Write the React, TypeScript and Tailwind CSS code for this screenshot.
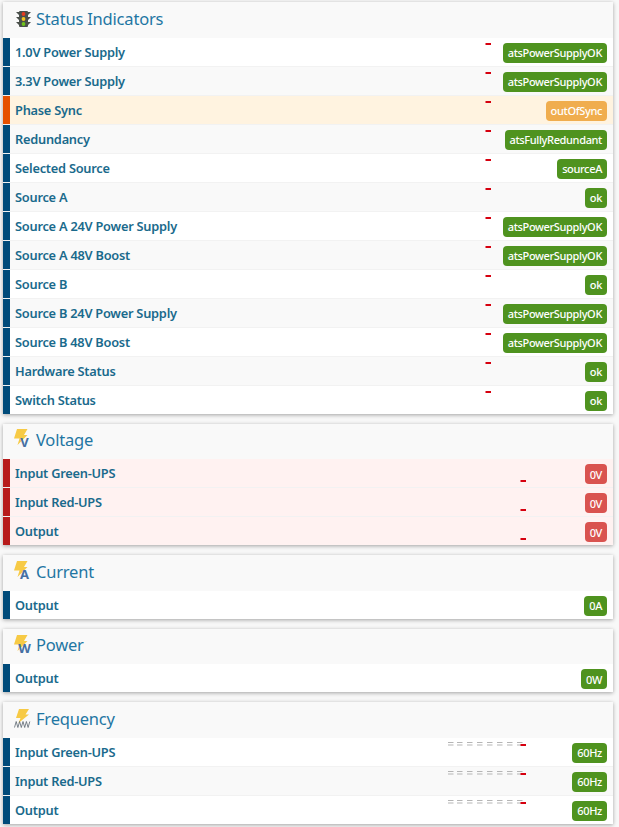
import React from 'react';

type Tone = 'ok' | 'warn' | 'bad';

type Row = { label: string; value: string; tone?: Tone };

const statusRows: Row[] = [
  { label: '1.0V Power Supply', value: 'atsPowerSupplyOK' },
  { label: '3.3V Power Supply', value: 'atsPowerSupplyOK' },
  { label: 'Phase Sync', value: 'outOfSync', tone: 'warn' },
  { label: 'Redundancy', value: 'atsFullyRedundant' },
  { label: 'Selected Source', value: 'sourceA' },
  { label: 'Source A', value: 'ok' },
  { label: 'Source A 24V Power Supply', value: 'atsPowerSupplyOK' },
  { label: 'Source A 48V Boost', value: 'atsPowerSupplyOK' },
  { label: 'Source B', value: 'ok' },
  { label: 'Source B 24V Power Supply', value: 'atsPowerSupplyOK' },
  { label: 'Source B 48V Boost', value: 'atsPowerSupplyOK' },
  { label: 'Hardware Status', value: 'ok' },
  { label: 'Switch Status', value: 'ok' },
];

const voltageRows: Row[] = [
  { label: 'Input Green-UPS', value: '0V', tone: 'bad' },
  { label: 'Input Red-UPS', value: '0V', tone: 'bad' },
  { label: 'Output', value: '0V', tone: 'bad' },
];

const frequencyRows: Row[] = [
  { label: 'Input Green-UPS', value: '60Hz' },
  { label: 'Input Red-UPS', value: '60Hz' },
  { label: 'Output', value: '60Hz' },
];

function TrafficLight() {
  return (
    <svg width="15" height="16" viewBox="0 0 15 16" className="shrink-0">
      <path d="M0 1h3v3zM15 1h-3v3zM0 6h3v3zM15 6h-3v3zM0 11h3v3zM15 11h-3v3z" fill="#4a4f4a" />
      <rect x="3" y="0" width="9" height="16" rx="1" fill="#4b514c" />
      <circle cx="7.5" cy="3" r="1.9" fill="#e53b1f" />
      <circle cx="7.5" cy="8" r="1.9" fill="#f4c51c" />
      <circle cx="7.5" cy="13" r="1.9" fill="#6fc31c" />
    </svg>
  );
}

function BoltIcon({ letter }: { letter: string }) {
  return (
    <svg width="18" height="22" viewBox="0 0 18 22" className="shrink-0">
      <path d="M3 0h10.5L10 6h3.5L3.5 16l2-6.5H0z" fill="#f7ca45" />
      <text x="10.5" y="18" textAnchor="middle" fontSize="13" fontWeight="700" fontFamily="'Noto Sans', sans-serif" fill="#4570a3">
        {letter}
      </text>
    </svg>
  );
}

function WaveIcon() {
  return (
    <svg width="18" height="20" viewBox="0 0 18 20" className="shrink-0">
      <path d="M5 0h10l-3.5 5.5H15L4.5 14l2-5H2z" fill="#f7ca45" />
      <path d="M0.5 18.5l1.7-6 1.7 6 1.7-6 1.7 6 1.7-6 1.7 6 1.7-6 1.7 6 1.7-6" fill="none" stroke="#5c6670" strokeWidth="0.8" />
    </svg>
  );
}

const dashes = [2, 11, 21, 31, 41, 51, 61, 71];

function Spark({ className, dashed }: { className: string; dashed?: boolean }) {
  return (
    <svg width="80" height="5" viewBox="0 0 80 5" className={className}>
      {dashed &&
        dashes.map((x) => (
          <g key={x} stroke="#b5b5b5" strokeWidth="1">
            <line x1={x} y1="0.5" x2={x + 5.5} y2="0.5" />
            <line x1={x} y1="3" x2={x + 5.5} y2="3" />
          </g>
        ))}
      <rect x="74.5" y={dashed ? 2 : 1} width="5.5" height="2" fill="#d6000f" />
    </svg>
  );
}

function Badge({ value, tone }: { value: string; tone?: Tone }) {
  const color = tone === 'warn' ? 'bg-[#f0ad4e]' : tone === 'bad' ? 'bg-[#d9534f]' : 'bg-[#4f931f]';
  return (
    <span className={`${color} rounded-[4px] px-[5px] h-5 flex items-center text-[11px] font-medium tracking-[-0.35px] text-white leading-none mt-[5px]`}>
      {value}
    </span>
  );
}

function DataRow({
  row,
  index,
  sparkClass,
  valueClass,
  dashed,
}: {
  row: Row;
  index: number;
  sparkClass: string;
  valueClass: string;
  dashed?: boolean;
}) {
  const bar = row.tone === 'warn' ? 'bg-[#e65100]' : row.tone === 'bad' ? 'bg-[#b71c1c]' : 'bg-[#004b7a]';
  const bg =
    row.tone === 'warn'
      ? 'bg-[#fff3e0]'
      : row.tone === 'bad'
        ? 'bg-[#fff2f1]'
        : index % 2 === 1
          ? 'bg-[#f9f9f9]'
          : 'bg-white';
  return (
    <div className={`${bg} flex h-[29px] border-b border-[#f2f2f2] last:h-[28px] last:border-b-0`}>
      <div className={`${bar} w-[7px] shrink-0`} />
      <div className="flex-1 pl-[5px] text-[12.8px] font-semibold tracking-[-0.24px] leading-[28px] text-[#1a6a8c] whitespace-nowrap">{row.label}</div>
      <Spark className={sparkClass} dashed={dashed} />
      <div className={`${valueClass} flex justify-end pr-[6px]`}>
        <Badge value={row.value} tone={row.tone} />
      </div>
    </div>
  );
}

function Panel({
  title,
  icon,
  rows,
  sparkClass,
  valueClass,
  dashed,
}: {
  title: string;
  icon: React.ReactNode;
  rows: Row[];
  sparkClass: string;
  valueClass: string;
  dashed?: boolean;
}) {
  return (
    <section className="bg-white shadow-[0_1px_4px_rgba(0,0,0,0.35)]">
      <header className="flex h-[35.6px] items-center gap-[5px] bg-[#f9f9f9] pb-[2px] pl-[12px]">
        <div className="flex w-4 shrink-0 justify-center">{icon}</div>
        <h2 className="text-[16.5px] tracking-[-0.2px] leading-none text-[#1f76a3]">{title}</h2>
      </header>
      {rows.map((row, i) => (
        <DataRow key={row.label} row={row} index={i} sparkClass={sparkClass} valueClass={valueClass} dashed={dashed} />
      ))}
    </section>
  );
}

export default function App() {
  return (
    <div className="h-[827px] overflow-hidden bg-[#f8f8f8] pl-[3px] pr-[6px] pt-[2px] font-['Noto_Sans',sans-serif]">
      <div className="flex flex-col gap-[10px]">
        <Panel
          title="Status Indicators"
          icon={<TrafficLight />}
          rows={statusRows}
          sparkClass="mt-[4px] shrink-0"
          valueClass="w-[122px]"
        />
        <Panel
          title="Voltage"
          icon={<BoltIcon letter="V" />}
          rows={voltageRows}
          sparkClass="mt-[20px] shrink-0"
          valueClass="w-[87px]"
        />
        <Panel
          title="Current"
          icon={<BoltIcon letter="A" />}
          rows={[{ label: 'Output', value: '0A' }]}
          sparkClass="hidden"
          valueClass="w-[87px]"
        />
        <Panel
          title="Power"
          icon={<BoltIcon letter="W" />}
          rows={[{ label: 'Output', value: '0W' }]}
          sparkClass="hidden"
          valueClass="w-[87px]"
        />
        <Panel
          title="Frequency"
          icon={<WaveIcon />}
          rows={frequencyRows}
          sparkClass="mt-[4px] shrink-0"
          valueClass="w-[87px]"
          dashed
        />
      </div>
    </div>
  );
}
